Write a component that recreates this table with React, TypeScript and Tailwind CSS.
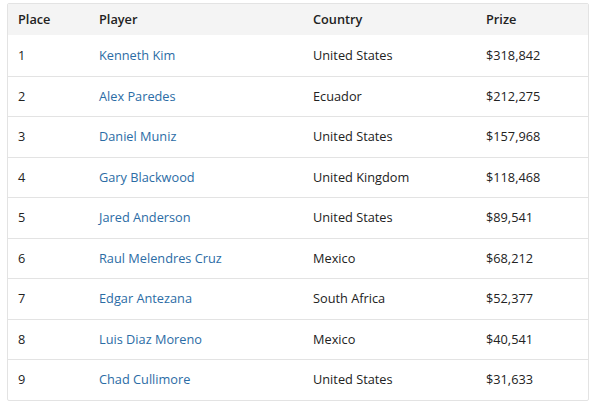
const rows = [
  ["1", "Kenneth Kim", "United States", "$318,842"],
  ["2", "Alex Paredes", "Ecuador", "$212,275"],
  ["3", "Daniel Muniz", "United States", "$157,968"],
  ["4", "Gary Blackwood", "United Kingdom", "$118,468"],
  ["5", "Jared Anderson", "United States", "$89,541"],
  ["6", "Raul Melendres Cruz", "Mexico", "$68,212"],
  ["7", "Edgar Antezana", "South Africa", "$52,377"],
  ["8", "Luis Diaz Moreno", "Mexico", "$40,541"],
  ["9", "Chad Cullimore", "United States", "$31,633"],
];

export default function App() {
  return (
    <div className="w-[599px] h-[408px] bg-white pt-[3px] pl-[7px] font-['Open_Sans',sans-serif] text-[12.75px] text-[#222]">
      <div className="w-[582px] border border-[#e3e3e3] rounded-[2px] overflow-hidden">
        <div className="grid grid-cols-[80px_214px_174px_1fr] h-[31px] items-center bg-[#f4f4f4] font-semibold">
          <div className="pl-[10px]">Place</div>
          <div className="pl-[11px]">Player</div>
          <div className="pl-[11px]">Country</div>
          <div className="pl-[10px]">Prize</div>
        </div>
        {rows.map(([place, name, country, prize], i) => (
          <div
            key={place}
            className={`grid grid-cols-[80px_214px_174px_1fr] h-[40.5px] items-center ${i > 0 ? "border-t border-[#e3e3e3]" : ""}`}
          >
            <div className="pl-[10px]">{place}</div>
            <div className="pl-[11px]">
              <a href="#" className="text-[#2b6ca5]">{name}</a>
            </div>
            <div className="pl-[11px]">{country}</div>
            <div className="pl-[10px]">{prize}</div>
          </div>
        ))}
      </div>
    </div>
  );
}
